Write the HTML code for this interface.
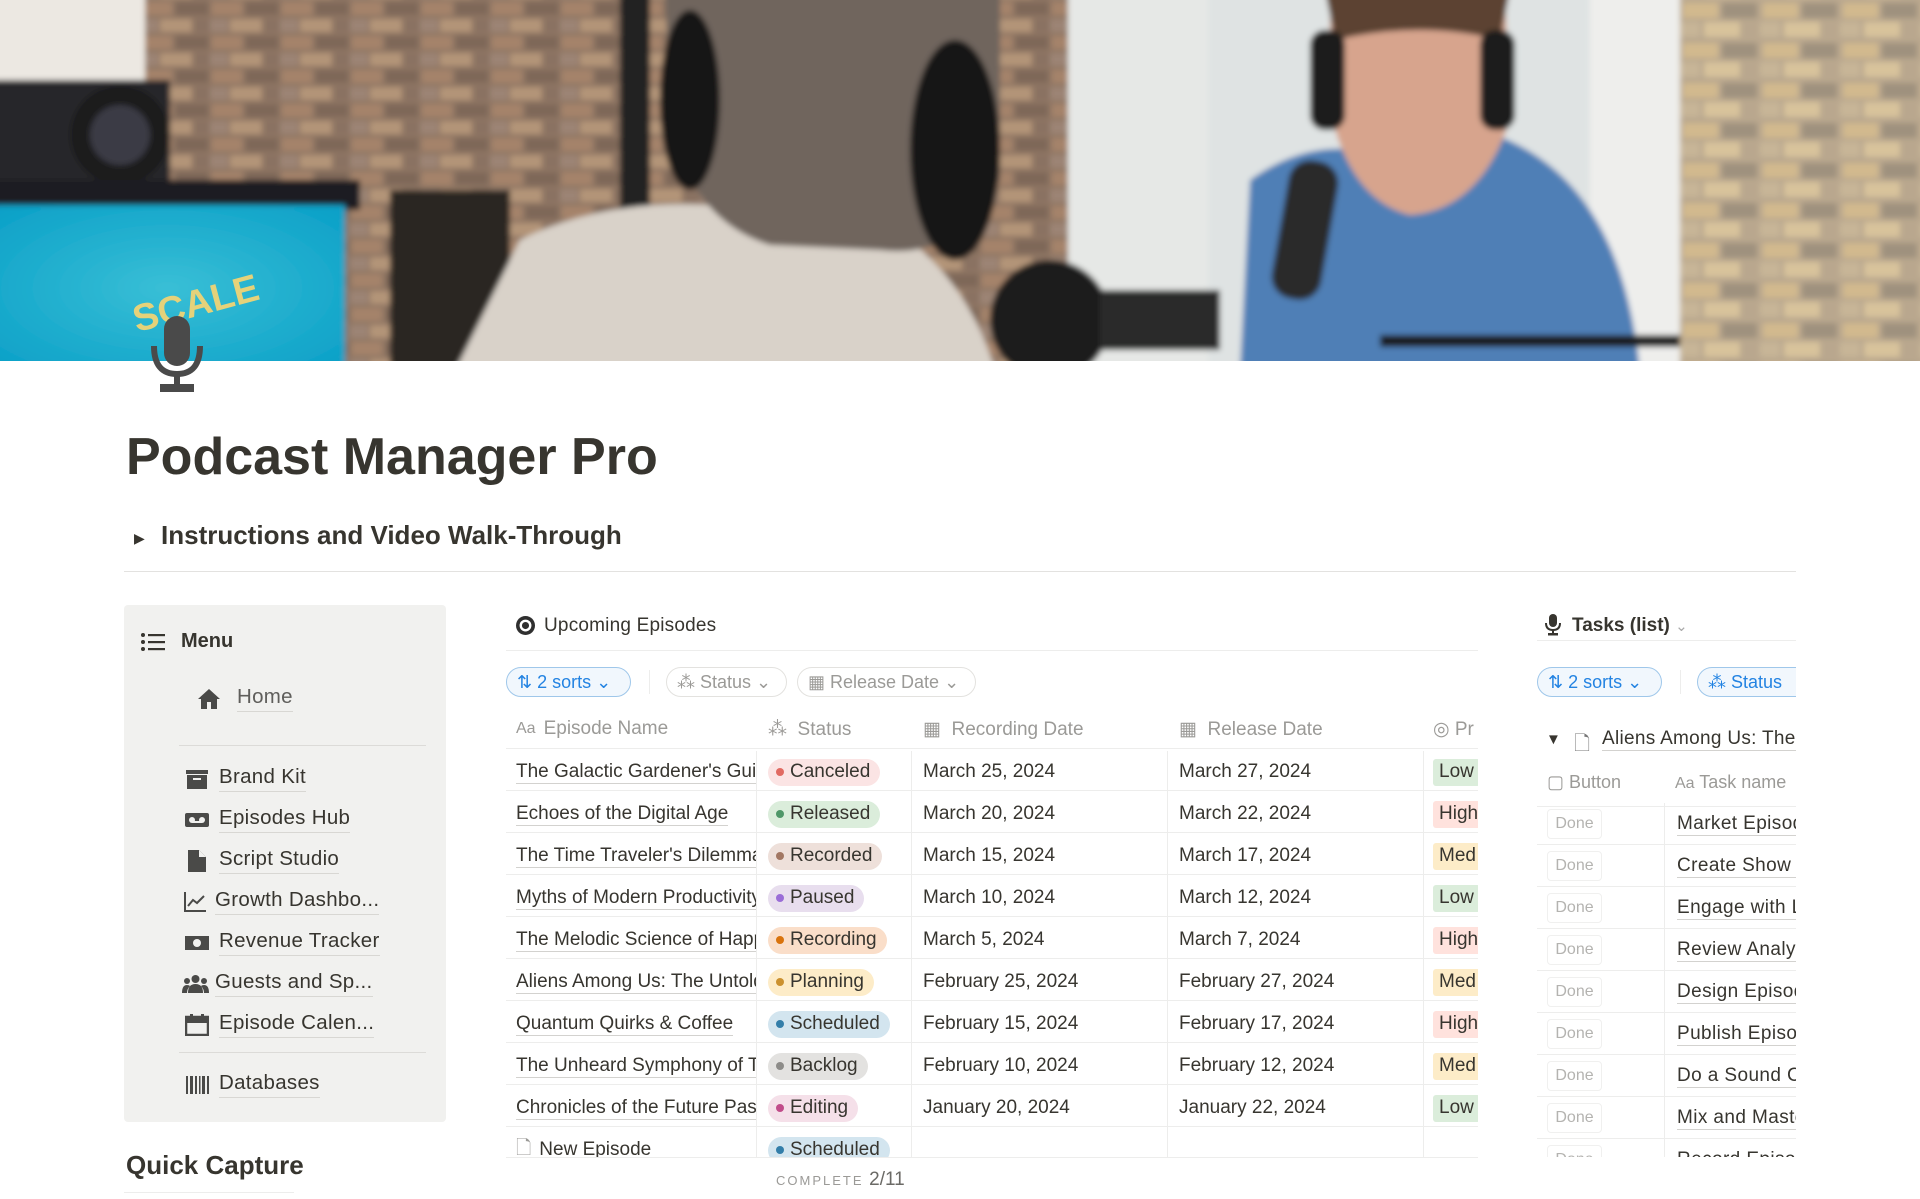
<!DOCTYPE html>
<html><head><meta charset="utf-8">
<style>
*{margin:0;padding:0;box-sizing:border-box}
body{width:1920px;height:1199px;overflow:hidden;background:#fff;font-family:"Liberation Sans",Arial,sans-serif;color:#37352f;position:relative}
.a{position:absolute}
.menu{left:124px;top:605px;width:322px;height:517px;background:#f1f1ef;border-radius:4px}
.mi{position:absolute;font-size:20.5px;letter-spacing:0.3px;color:#37352f;display:flex;align-items:center;gap:10px}
.mi span{border-bottom:1px solid #d8d7d3;padding-bottom:2px}
.ic{width:24px;height:22px;display:inline-block}
.pill{position:absolute;top:667px;height:30px;border:1px solid #e3e2df;border-radius:15px;font-size:18px;color:#9b9a97;display:flex;align-items:center;padding:0 10px;gap:6px}
.pill.b{border-color:#9fc7ea;background:#f1f7fd;color:#2383e2}
.tbl{left:506px;top:706px;width:972px;height:451px;overflow:hidden}
.row{position:absolute;left:0;width:972px;height:42px;border-bottom:1px solid #ededec;font-size:19px}
.c{position:absolute;top:2px;height:42px;display:flex;align-items:center;white-space:nowrap;overflow:hidden;border-right:1px solid #ededec}
.c1{left:0;width:251px;padding-left:10px}
.c1 u{text-decoration:none;border-bottom:1px solid #d3d2cf}
.c2{left:251px;width:155px;padding-left:11px}
.c3{left:406px;width:256px;padding-left:11px}
.c4{left:662px;width:256px;padding-left:11px}
.c5{left:918px;width:80px;padding-left:9px;border-right:none}
.st{height:27px;border-radius:14px;padding:0 10px 0 8px;display:flex;align-items:center;gap:6px;font-size:19px}
.st i{width:8px;height:8px;border-radius:50%;display:inline-block}
.pr{height:27px;padding:0 6px;border-radius:3px;font-size:19px;display:flex;align-items:center}
.hdr{color:#9b9a97}
.hdr .c{border-right:none}
.rt{left:1537px;top:749px;width:259px;height:408px;overflow:hidden}
.tr{position:absolute;left:0;width:259px;height:42px;border-bottom:1px solid #ededec;font-size:19px}
.done{position:absolute;left:10px;top:6px;width:55px;height:30px;border:1px solid #f0f0ef;border-radius:4px;color:#b4b3b0;font-size:16px;display:flex;align-items:center;justify-content:center}
.tn{position:absolute;left:127px;top:0;height:42px;display:flex;align-items:center;white-space:nowrap;color:#37352f;border-left:1px solid #ededec;padding-left:12px;width:140px;overflow:hidden}
.tn span{border-bottom:1px solid #d3d2cf;letter-spacing:0.4px}
</style></head><body>

<svg class="a" style="left:0;top:0" width="1920" height="361" viewBox="0 0 1920 361">
<defs>
<pattern id="br" width="70" height="34" patternUnits="userSpaceOnUse">
<rect width="70" height="34" fill="#8f7664"/>
<rect x="2" y="2" width="30" height="13" fill="#a5836a"/><rect x="36" y="2" width="32" height="13" fill="#7e6858"/>
<rect x="-14" y="19" width="32" height="13" fill="#9c8474"/><rect x="20" y="19" width="32" height="13" fill="#b39478"/><rect x="54" y="19" width="32" height="13" fill="#8a7262"/>
</pattern>
<pattern id="br2" width="80" height="40" patternUnits="userSpaceOnUse">
<rect width="80" height="40" fill="#b9a78e"/>
<rect x="3" y="3" width="35" height="15" fill="#d2b98e"/><rect x="42" y="3" width="35" height="15" fill="#9f917e"/>
<rect x="-16" y="22" width="36" height="15" fill="#c7b597"/><rect x="24" y="22" width="36" height="15" fill="#d8c39b"/>
</pattern>
<radialGradient id="mon" cx="0.5" cy="0.5" r="0.7"><stop offset="0" stop-color="#39bfd6"/><stop offset="1" stop-color="#0a9fc7"/></radialGradient>
<filter id="bl"><feGaussianBlur stdDeviation="3"/></filter>
</defs>
<g filter="url(#bl)">
<rect x="-10" y="-10" width="1940" height="381" fill="url(#br)"/>
<rect x="1068" y="-10" width="140" height="381" fill="#e6e8e6"/>
<rect x="1208" y="-10" width="390" height="381" fill="#dfe3e3"/>
<rect x="1590" y="-10" width="90" height="381" fill="#eeeeec"/>
<rect x="1680" y="-10" width="250" height="381" fill="url(#br2)"/>
<rect x="-10" y="-10" width="155" height="190" fill="#ece8e2"/>
<rect x="-10" y="80" width="180" height="110" fill="#26262a"/>
<circle cx="120" cy="135" r="50" fill="#1b1b1f"/><circle cx="120" cy="135" r="30" fill="#3a3a44"/>
<rect x="-10" y="180" width="370" height="30" fill="#1e1e20"/>
<rect x="-10" y="205" width="355" height="166" fill="url(#mon)"/>
<rect x="390" y="190" width="120" height="181" fill="#2a2523"/>
<rect x="620" y="-10" width="30" height="381" fill="#222"/>
<path d="M455 371 L520 240 Q620 190 760 210 L840 200 Q960 250 995 371 Z" fill="#d9d2c9"/>
<path d="M665 -10 L1000 -10 L1000 180 Q960 260 880 250 L770 245 Q690 220 670 120 Z" fill="#6f655d"/>
<ellipse cx="690" cy="100" rx="30" ry="90" fill="#151515"/>
<ellipse cx="955" cy="150" rx="45" ry="110" fill="#141414"/>
<path d="M1240 371 L1250 180 Q1320 130 1390 160 L1480 130 Q1620 170 1640 371 Z" fill="#4f7fb6"/>
<path d="M1330 -10 L1505 -10 L1510 120 Q1480 210 1410 215 Q1350 200 1330 110 Z" fill="#d7a48d"/>
<path d="M1325 -10 L1510 -10 L1500 40 Q1420 20 1335 40 Z" fill="#5b4331"/>
<rect x="1310" y="30" width="35" height="100" rx="15" fill="#1a1a1a"/><rect x="1480" y="30" width="35" height="100" rx="15" fill="#1a1a1a"/>
<rect x="1280" y="160" width="50" height="140" rx="22" fill="#2a2a2a" transform="rotate(10 1305 230)"/>
<ellipse cx="1050" cy="320" rx="60" ry="60" fill="#1c1c1c"/>
<rect x="1100" y="290" width="120" height="60" fill="#2b2b2b"/>
<rect x="1380" y="335" width="300" height="12" fill="#1a1a1a"/>
</g>
<text x="130" y="320" fill="#e5d27a" font-size="38" font-weight="bold" transform="rotate(-15 180 300)" font-family="Liberation Sans">SCALE</text>
<rect x="0" y="361" width="1920" height="1" fill="#fff"/>
</svg>

<svg class="a" style="left:147px;top:316px" width="60" height="78" viewBox="0 0 60 78">
<rect x="17" y="0" width="26" height="50" rx="13" fill="#4a4a4a"/>
<path d="M7 30 Q7 58 30 58 Q53 58 53 30" fill="none" stroke="#4a4a4a" stroke-width="6"/>
<rect x="27" y="58" width="6" height="12" fill="#4a4a4a"/><rect x="13" y="68" width="34" height="8" fill="#4a4a4a"/>
</svg>

<div class="a" style="left:126px;top:427px;font-size:52px;font-weight:bold;color:#37352f">Podcast Manager Pro</div>
<div class="a" style="left:134px;top:530px;font-size:14px;color:#37352f">▶</div>
<div class="a" style="left:161px;top:520px;font-size:26px;font-weight:bold;color:#37352f">Instructions and Video Walk-Through</div>
<div class="a" style="left:124px;top:571px;width:1672px;height:1px;background:#e3e2e0"></div>

<div class="a menu"></div>
<svg class="a" style="left:141px;top:632px" width="24" height="20" viewBox="0 0 24 20"><g fill="#37352f"><circle cx="2" cy="3" r="2"/><circle cx="2" cy="10" r="2"/><circle cx="2" cy="17" r="2"/><rect x="7" y="2" width="17" height="2.2"/><rect x="7" y="9" width="17" height="2.2"/><rect x="7" y="16" width="17" height="2.2"/></g></svg>
<div class="a" style="left:181px;top:630px;font-size:20px;font-weight:bold">Menu</div>
<div class="mi" style="left:197px;top:685px;color:#6b6a66"><svg class="ic" viewBox="0 0 24 22"><path d="M12 1 L1 11 H4 V21 H10 V14 H14 V21 H20 V11 H23 Z" fill="#4a4a48"/></svg><span style="margin-left:6px;color:#5f5e5b">Home</span></div>
<div class="a" style="left:179px;top:745px;width:247px;height:1px;background:#dcdbd8"></div>
<div class="mi" style="left:185px;top:765px"><svg class="ic" viewBox="0 0 24 22"><rect x="1" y="2" width="22" height="4" fill="#4a4a48"/><rect x="2" y="7" width="20" height="14" fill="#4a4a48"/><rect x="8" y="10" width="8" height="2" fill="#f1f1ef"/></svg><span>Brand Kit</span></div>
<div class="mi" style="left:185px;top:806px"><svg class="ic" viewBox="0 0 24 22"><rect x="0" y="4" width="24" height="14" rx="2" fill="#4a4a48"/><circle cx="7" cy="11" r="3" fill="#f1f1ef"/><circle cx="17" cy="11" r="3" fill="#f1f1ef"/><rect x="7" y="12" width="10" height="2" fill="#f1f1ef"/></svg><span>Episodes Hub</span></div>
<div class="mi" style="left:185px;top:847px"><svg class="ic" viewBox="0 0 24 22"><path d="M3 0 H14 L21 7 V22 H3 Z" fill="#4a4a48"/><path d="M14 0 V7 H21" fill="#f1f1ef"/></svg><span>Script Studio</span></div>
<div class="mi" style="left:183px;top:888px;gap:8px"><svg class="ic" viewBox="0 0 24 22"><path d="M2 1 V20 H23" fill="none" stroke="#4a4a48" stroke-width="2"/><path d="M5 15 L10 9 L14 12 L21 5" fill="none" stroke="#4a4a48" stroke-width="2"/></svg><span>Growth Dashbo...</span></div>
<div class="mi" style="left:185px;top:929px"><svg class="ic" viewBox="0 0 24 22"><rect x="0" y="4" width="24" height="14" fill="#4a4a48"/><circle cx="12" cy="11" r="4" fill="#f1f1ef"/></svg><span>Revenue Tracker</span></div>
<div class="mi" style="left:182px;top:970px;gap:6px"><svg class="ic" style="width:27px" viewBox="0 0 27 22"><g fill="#4a4a48"><circle cx="13.5" cy="6" r="4"/><circle cx="5" cy="8" r="3"/><circle cx="22" cy="8" r="3"/><path d="M6 20 Q6 11 13.5 11 Q21 11 21 20Z"/><path d="M0 20 Q0 12 5 12 Q7 12 8 13 Q5 16 5 20Z"/><path d="M27 20 Q27 12 22 12 Q20 12 19 13 Q22 16 22 20Z"/></g></svg><span>Guests and Sp...</span></div>
<div class="mi" style="left:185px;top:1011px"><svg class="ic" viewBox="0 0 24 22"><rect x="1" y="3" width="22" height="18" fill="none" stroke="#4a4a48" stroke-width="2.5"/><rect x="1" y="3" width="22" height="6" fill="#4a4a48"/><rect x="5" y="0" width="3" height="5" fill="#4a4a48"/><rect x="16" y="0" width="3" height="5" fill="#4a4a48"/></svg><span>Episode Calen...</span></div>
<div class="a" style="left:179px;top:1052px;width:247px;height:1px;background:#dcdbd8"></div>
<div class="mi" style="left:185px;top:1071px"><svg class="ic" viewBox="0 0 24 22"><g fill="#4a4a48"><rect x="1" y="2" width="2" height="18"/><rect x="5" y="2" width="3" height="18"/><rect x="10" y="2" width="2" height="18"/><rect x="14" y="2" width="1.5" height="18"/><rect x="17" y="2" width="3" height="18"/><rect x="22" y="2" width="2" height="18"/></g></svg><span>Databases</span></div>
<div class="a" style="left:126px;top:1150px;font-size:26px;font-weight:bold">Quick Capture</div>
<div class="a" style="left:124px;top:1192px;width:170px;height:1px;background:#ededec"></div>

<!-- middle -->
<svg class="a" style="left:516px;top:616px" width="19" height="19" viewBox="0 0 20 20"><circle cx="10" cy="10" r="10" fill="#2f2f2f"/><circle cx="10" cy="10" r="5" fill="none" stroke="#fff" stroke-width="2.5"/></svg>
<div class="a" style="left:544px;top:615px;font-size:19px;letter-spacing:0.2px">Upcoming Episodes</div>
<div class="a" style="left:506px;top:650px;width:972px;height:1px;background:#ededec"></div>
<div class="pill b" style="left:506px;width:125px">⇅ 2 sorts ⌄</div>
<div class="a" style="left:649px;top:670px;width:1px;height:24px;background:#ededec"></div>
<div class="pill" style="left:666px;width:121px">⁂ Status ⌄</div>
<div class="pill" style="left:797px;width:179px">▦ Release Date ⌄</div>

<div class="a tbl">
<div class="row hdr" style="top:0;height:43px"><div class="c c1" style="color:#9b9a97"><span style="font-size:16px;margin-right:8px">Aa</span>Episode Name</div><div class="c c2">⁂&nbsp; Status</div><div class="c c3">▦&nbsp; Recording Date</div><div class="c c4">▦&nbsp; Release Date</div><div class="c c5">◎ Pr</div></div>

<div class="row" style="top:43px"><div class="c c1"><u>The Galactic Gardener's Guide</u></div><div class="c c2"><div class="st" style="background:#fbe4e4"><i style="background:#e16a62"></i>Canceled</div></div><div class="c c3">March 25, 2024</div><div class="c c4">March 27, 2024</div><div class="c c5"><div class="pr" style="background:#dbeddb">Low</div></div></div>
<div class="row" style="top:85px"><div class="c c1"><u>Echoes of the Digital Age</u></div><div class="c c2"><div class="st" style="background:#dbeddb"><i style="background:#4f9768"></i>Released</div></div><div class="c c3">March 20, 2024</div><div class="c c4">March 22, 2024</div><div class="c c5"><div class="pr" style="background:#ffe2dd">High</div></div></div>
<div class="row" style="top:127px"><div class="c c1"><u>The Time Traveler's Dilemma</u></div><div class="c c2"><div class="st" style="background:#eee0da"><i style="background:#a27763"></i>Recorded</div></div><div class="c c3">March 15, 2024</div><div class="c c4">March 17, 2024</div><div class="c c5"><div class="pr" style="background:#fdecc8">Med</div></div></div>
<div class="row" style="top:169px"><div class="c c1"><u>Myths of Modern Productivity</u></div><div class="c c2"><div class="st" style="background:#e8deee"><i style="background:#9a6dd7"></i>Paused</div></div><div class="c c3">March 10, 2024</div><div class="c c4">March 12, 2024</div><div class="c c5"><div class="pr" style="background:#dbeddb">Low</div></div></div>
<div class="row" style="top:211px"><div class="c c1"><u>The Melodic Science of Happiness</u></div><div class="c c2"><div class="st" style="background:#fadec9"><i style="background:#d9730d"></i>Recording</div></div><div class="c c3">March 5, 2024</div><div class="c c4">March 7, 2024</div><div class="c c5"><div class="pr" style="background:#ffe2dd">High</div></div></div>
<div class="row" style="top:253px"><div class="c c1"><u>Aliens Among Us: The Untold</u></div><div class="c c2"><div class="st" style="background:#fdecc8"><i style="background:#cb912f"></i>Planning</div></div><div class="c c3">February 25, 2024</div><div class="c c4">February 27, 2024</div><div class="c c5"><div class="pr" style="background:#fdecc8">Med</div></div></div>
<div class="row" style="top:295px"><div class="c c1"><u>Quantum Quirks &amp; Coffee</u></div><div class="c c2"><div class="st" style="background:#d3e5ef"><i style="background:#337ea9"></i>Scheduled</div></div><div class="c c3">February 15, 2024</div><div class="c c4">February 17, 2024</div><div class="c c5"><div class="pr" style="background:#ffe2dd">High</div></div></div>
<div class="row" style="top:337px"><div class="c c1"><u>The Unheard Symphony of The</u></div><div class="c c2"><div class="st" style="background:#e3e2e0"><i style="background:#8d8c89"></i>Backlog</div></div><div class="c c3">February 10, 2024</div><div class="c c4">February 12, 2024</div><div class="c c5"><div class="pr" style="background:#fdecc8">Med</div></div></div>
<div class="row" style="top:379px"><div class="c c1"><u>Chronicles of the Future Past</u></div><div class="c c2"><div class="st" style="background:#f5e0e9"><i style="background:#c14c8a"></i>Editing</div></div><div class="c c3">January 20, 2024</div><div class="c c4">January 22, 2024</div><div class="c c5"><div class="pr" style="background:#dbeddb">Low</div></div></div>
<div class="row" style="top:421px"><div class="c c1"><span style="color:#9b9a97;margin-right:8px">🗋</span>New Episode</div><div class="c c2"><div class="st" style="background:#d3e5ef"><i style="background:#337ea9"></i>Scheduled</div></div><div class="c c3"></div><div class="c c4"></div><div class="c c5"></div></div>
</div>
<div class="a" style="left:506px;top:1157px;width:972px;height:1px;background:#ededec"></div>
<div class="a" style="left:776px;top:1169px;font-size:13px;letter-spacing:2px;color:#9b9a97">COMPLETE <span style="font-size:19px;letter-spacing:0;color:#6b6a66">2/11</span></div>

<!-- right -->
<svg class="a" style="left:1545px;top:614px" width="16" height="22" viewBox="0 0 16 22"><rect x="4" y="0" width="8" height="13" rx="4" fill="#37352f"/><path d="M1 9 Q1 16 8 16 Q15 16 15 9" fill="none" stroke="#37352f" stroke-width="2"/><rect x="7" y="16" width="2" height="4" fill="#37352f"/><rect x="3" y="19" width="10" height="2.5" fill="#37352f"/></svg>
<div class="a" style="left:1572px;top:615px;font-size:19px;font-weight:bold">Tasks (list) <span style="color:#aaa;font-weight:normal;font-size:15px">⌄</span></div>
<div class="a" style="left:1537px;top:640px;width:259px;height:1px;background:#ededec"></div>
<div class="a" style="left:1537px;top:650px;width:259px;height:60px;overflow:hidden">
<div class="pill b" style="left:0;top:17px;width:125px">⇅ 2 sorts ⌄</div>
<div class="a" style="left:143px;top:20px;width:1px;height:24px;background:#ededec"></div>
<div class="pill b" style="left:160px;top:17px;width:130px">⁂ Status</div>
</div>
<div class="a" style="left:1546px;top:731px;font-size:15px">▼</div>
<div class="a" style="left:1574px;top:729px;font-size:20px;color:#777">🗋</div>
<div class="a" style="left:1602px;top:728px;font-size:19px;letter-spacing:0.3px;white-space:nowrap;width:194px;overflow:hidden;border-bottom:1px solid #d3d2cf">Aliens Among Us: The Untold</div>
<div class="a" style="left:1547px;top:772px;font-size:18px;color:#9b9a97;white-space:nowrap">▢ Button</div>
<div class="a" style="left:1675px;top:772px;font-size:18px;color:#9b9a97;white-space:nowrap;width:121px;overflow:hidden"><span style="font-size:16px">Aa</span> Task name</div>
<div class="a" style="left:1537px;top:806px;width:259px;height:1px;background:#ededec"></div>
<div class="a rt" style="top:803px;height:354px">
<div class="tr" style="top:0"><div class="done">Done</div><div class="tn"><span>Market Episode</span></div></div>
<div class="tr" style="top:42px"><div class="done">Done</div><div class="tn"><span>Create Show Notes</span></div></div>
<div class="tr" style="top:84px"><div class="done">Done</div><div class="tn"><span>Engage with Listeners</span></div></div>
<div class="tr" style="top:126px"><div class="done">Done</div><div class="tn"><span>Review Analytics</span></div></div>
<div class="tr" style="top:168px"><div class="done">Done</div><div class="tn"><span>Design Episode</span></div></div>
<div class="tr" style="top:210px"><div class="done">Done</div><div class="tn"><span>Publish Episode</span></div></div>
<div class="tr" style="top:252px"><div class="done">Done</div><div class="tn"><span>Do a Sound Check</span></div></div>
<div class="tr" style="top:294px"><div class="done">Done</div><div class="tn"><span>Mix and Master</span></div></div>
<div class="tr" style="top:336px"><div class="done">Done</div><div class="tn"><span>Record Episode</span></div></div>
</div>
</body></html>
